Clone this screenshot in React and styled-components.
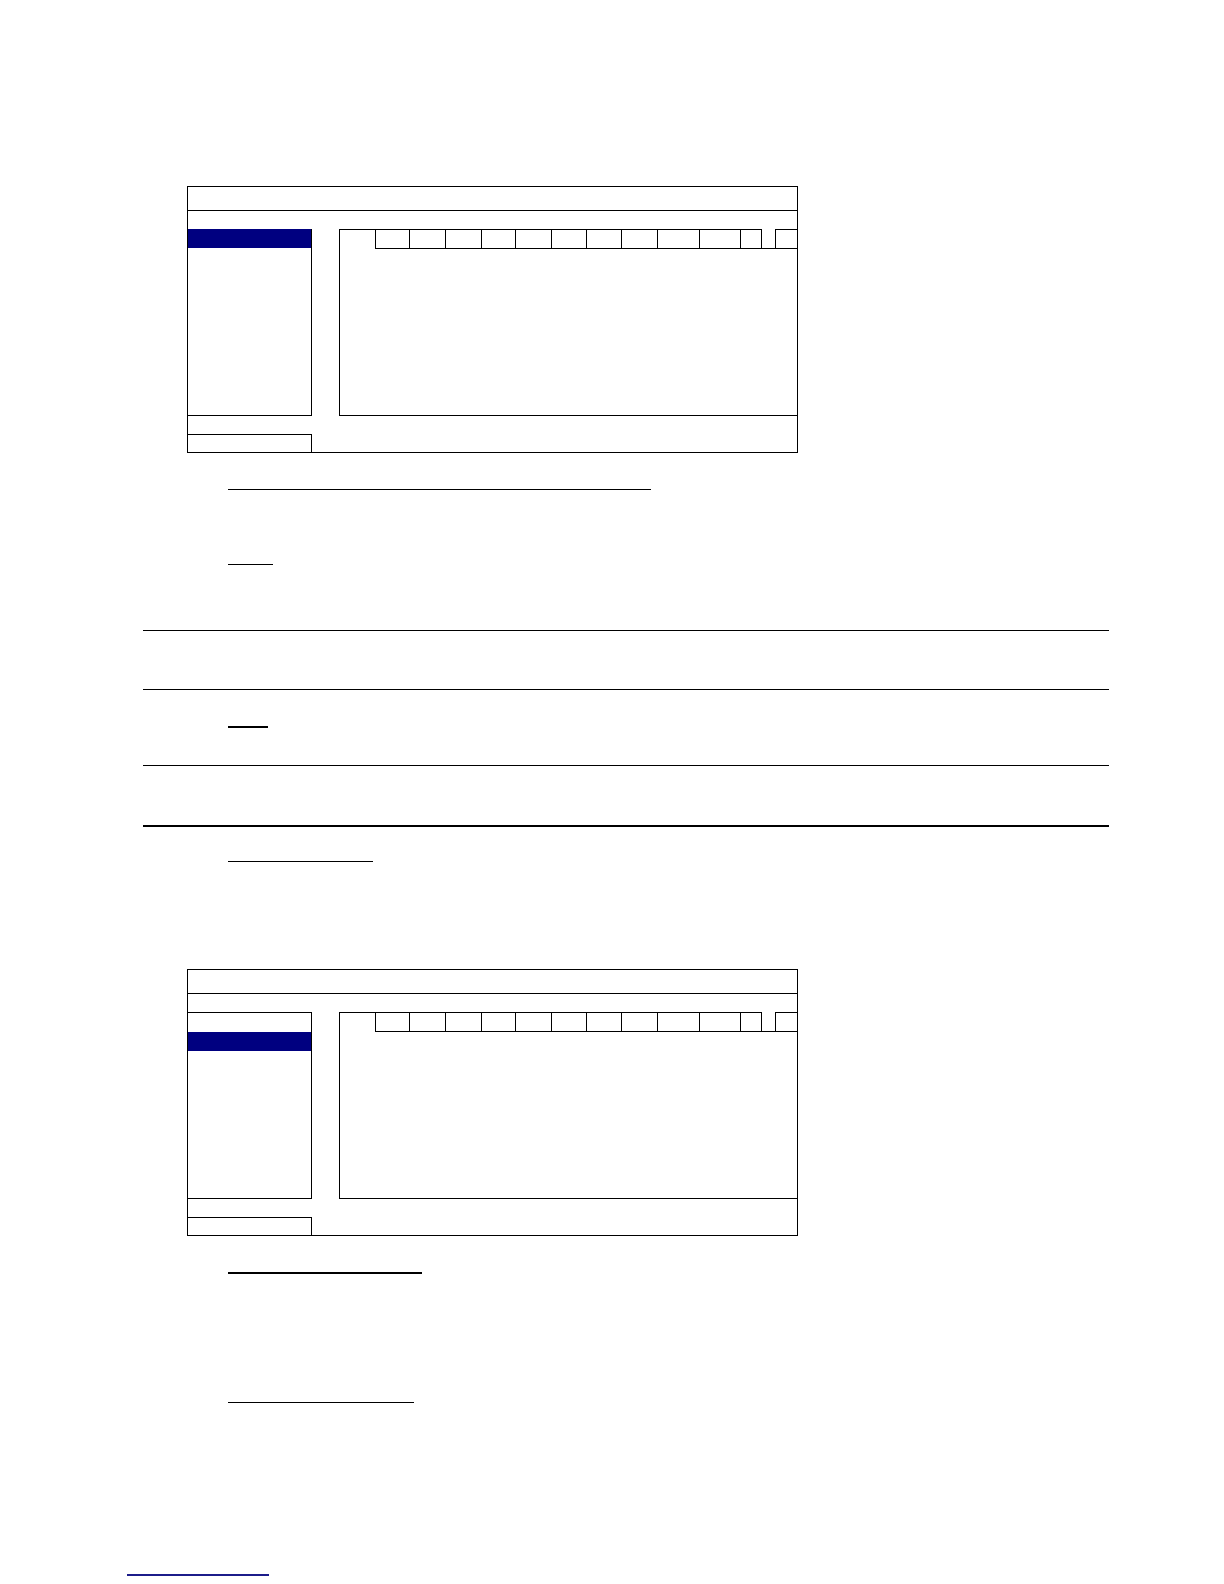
import styled, { createGlobalStyle } from "styled-components";

const GlobalStyle = createGlobalStyle`
  *, *::before, *::after {
    box-sizing: border-box;
  }

  body {
    margin: 0;
    background: #fff;
    font-family: "Liberation Serif", "Times New Roman", serif;
    color: #000;
  }
`;

const CELL_WIDTHS = [34, 36, 36, 34, 36, 35, 35, 36, 42, 41, 22];
const MENU_ITEMS = 9;

function OsdWindow({ selected }) {
  return (
    <Window>
      <TitleBar />
      <Spacer />
      <Body>
        <MenuPanel>
          {Array.from({ length: MENU_ITEMS }, (_, i) => (
            <MenuItem key={i} $selected={i === selected} $first={i === 0} />
          ))}
        </MenuPanel>
        <ContentPanel>
          <HeaderRow>
            <HeaderLead />
            <HeaderCells>
              {CELL_WIDTHS.map((w, i) => (
                <HeaderCell
                  key={i}
                  $width={w}
                  $closed={i === CELL_WIDTHS.length - 1}
                />
              ))}
              <HeaderGap />
              <HeaderCell $grow />
            </HeaderCells>
          </HeaderRow>
        </ContentPanel>
      </Body>
      <Spacer />
      <StatusRow>
        <StatusBox />
      </StatusRow>
    </Window>
  );
}

export default function App() {
  return (
    <>
      <GlobalStyle />
      <Page>
        <Figure $top={186}>
          <OsdWindow selected={0} />
        </Figure>

        <HeadingRule $top={36} $width={423} />
        <HeadingRule $top={74} $width={45} />

        <NoteTable>
          <NoteRow $height={59} />
          <NoteRow $height={76}>
            <HeadingRule $top={36} $width={40} $thick />
          </NoteRow>
          <NoteRow $height={60} />
        </NoteTable>

        <HeadingRule $top={34} $width={145} />

        <Figure $top={107}>
          <OsdWindow selected={1} />
        </Figure>

        <HeadingRule $top={36} $width={194} $thick />
        <HeadingRule $top={128} $width={186} />
      </Page>
      <Footer>
        <FooterLink href="#" />
      </Footer>
    </>
  );
}

const Page = styled.main`
  display: flex;
  flex-direction: column;
  width: 966px;
  margin-left: 143px;
`;

const Figure = styled.figure`
  margin: ${({ $top }) => $top}px 0 0 44px;
`;

const Window = styled.div`
  display: flex;
  flex-direction: column;
  width: 611px;
  height: 267px;
  border: 1px solid #000;
  background: #fff;
`;

const TitleBar = styled.div`
  height: 24px;
  border-bottom: 1px solid #000;
`;

const Spacer = styled.div`
  height: 18px;
`;

const Body = styled.div`
  display: flex;
  height: 187px;
`;

const MenuPanel = styled.ul`
  display: flex;
  flex-direction: column;
  width: 124px;
  margin: 0 27px 0 0;
  padding: 0;
  list-style: none;
  border-top: 1px solid #000;
  border-right: 1px solid #000;
  border-bottom: 1px solid #000;
`;

const MenuItem = styled.li`
  height: 19px;
  flex-shrink: 0;
  background: ${({ $selected }) => ($selected ? "#000080" : "transparent")};
  ${({ $selected, $first }) => $selected && $first && "margin-top: -1px;"}
`;

const ContentPanel = styled.div`
  flex: 1;
  border-left: 1px solid #000;
  border-bottom: 1px solid #000;
`;

const HeaderRow = styled.div`
  display: flex;
  height: 20px;
`;

const HeaderLead = styled.div`
  width: 35px;
  border-top: 1px solid #000;
`;

const HeaderCells = styled.div`
  display: flex;
  flex: 1;
  border-bottom: 1px solid #000;
`;

const HeaderCell = styled.div`
  flex: ${({ $grow }) => ($grow ? "1" : "none")};
  width: ${({ $width }) => ($width ? `${$width}px` : "auto")};
  border-top: 1px solid #000;
  border-left: 1px solid #000;
  border-right: ${({ $closed }) => ($closed ? "1px solid #000" : "none")};
`;

const HeaderGap = styled.div`
  width: 13px;
`;

const StatusRow = styled.div`
  display: flex;
  flex: 1;
`;

const StatusBox = styled.div`
  width: 124px;
  border-top: 1px solid #000;
  border-right: 1px solid #000;
`;

const HeadingRule = styled.div`
  width: ${({ $width }) => $width}px;
  height: ${({ $thick }) => ($thick ? 2 : 1)}px;
  margin: ${({ $top }) => $top}px 0 0 85px;
  background: #000;
`;

const NoteTable = styled.section`
  display: flex;
  flex-direction: column;
  margin-top: 65px;
  border-bottom: 2px solid #000;
`;

const NoteRow = styled.div`
  display: flex;
  flex-direction: column;
  height: ${({ $height }) => $height}px;
  border-top: 1px solid #000;
`;

const Footer = styled.footer`
  display: flex;
  padding: 171px 0 8px 127px;
`;

const FooterLink = styled.a`
  display: block;
  width: 142px;
  height: 2px;
  background: #1c1c8a;
`;
